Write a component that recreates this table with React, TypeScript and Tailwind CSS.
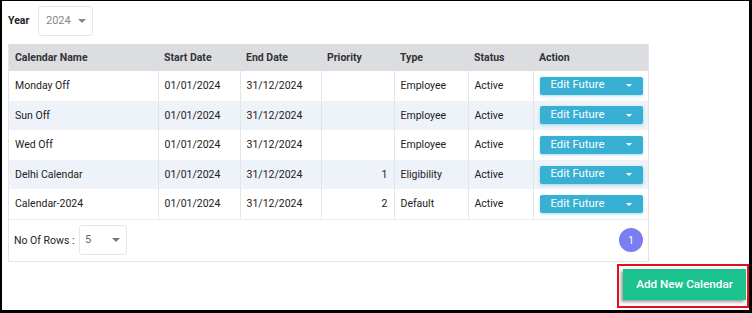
import { useState } from "react";

type CalendarRow = {
  name: string;
  start: string;
  end: string;
  priority?: number;
  type: string;
  status: string;
};

const rows: CalendarRow[] = [
  { name: "Monday Off", start: "01/01/2024", end: "31/12/2024", type: "Employee", status: "Active" },
  { name: "Sun Off", start: "01/01/2024", end: "31/12/2024", type: "Employee", status: "Active" },
  { name: "Wed Off", start: "01/01/2024", end: "31/12/2024", type: "Employee", status: "Active" },
  { name: "Delhi Calendar", start: "01/01/2024", end: "31/12/2024", priority: 1, type: "Eligibility", status: "Active" },
  { name: "Calendar-2024", start: "01/01/2024", end: "31/12/2024", priority: 2, type: "Default", status: "Active" },
];

function Caret({ className = "" }: { className?: string }) {
  return (
    <svg width="8" height="4" viewBox="0 0 8 4" className={className}>
      <path d="M0 0h8L4 4z" fill="currentColor" />
    </svg>
  );
}

export default function App() {
  const [year] = useState("2024");
  const [pageSize] = useState("5");

  return (
    <div className="h-[313px] w-[752px] overflow-hidden border-b-[3px] border-l-2 border-r-[3px] border-t border-black bg-white font-['Roboto',sans-serif] text-[10.5px] text-[#222]">
      <div className="pl-[6px] pr-[98px]">
        <div className="mt-[5px] flex h-[30px] items-center">
          <span className="w-[30px] text-[10.5px] font-bold text-[#222]">Year</span>
          <div className="flex h-[30px] w-[55px] items-center justify-between rounded-[3px] border border-[#e6e6e6] pl-[7px] pr-[6px] text-[11px] text-[#888]">
            <span>{year}</span>
            <Caret className="text-[#888]" />
          </div>
        </div>

        <div className="mt-[8px] w-[641px] border-b border-l border-r border-[#e4e5e8]">
          <table className="w-full table-fixed border-collapse">
            <colgroup>
              <col className="w-[149px]" />
              <col className="w-[82px]" />
              <col className="w-[81px]" />
              <col className="w-[73px]" />
              <col className="w-[74px]" />
              <col className="w-[65px]" />
              <col />
            </colgroup>
            <thead>
              <tr className="h-[27px] bg-[#dcdde1] text-left text-[10.5px] font-bold text-[#333]">
                <th className="px-[6px]">Calendar Name</th>
                <th className="px-[6px]">Start Date</th>
                <th className="px-[6px]">End Date</th>
                <th className="px-[6px]">Priority</th>
                <th className="px-[6px]">Type</th>
                <th className="px-[6px]">Status</th>
                <th className="px-[6px]">Action</th>
              </tr>
            </thead>
            <tbody>
              {rows.map((r, i) => (
                <tr key={r.name} className={i % 2 === 1 ? "h-[29.6px] bg-[#eef2f9]" : "h-[29.6px] bg-white"}>
                  <td className="border-r border-[#e4e5e8] px-[6px]">{r.name}</td>
                  <td className="border-r border-[#e4e5e8] px-[6px]">{r.start}</td>
                  <td className="border-r border-[#e4e5e8] px-[6px]">{r.end}</td>
                  <td className="border-r border-[#e4e5e8] px-[6px] text-right">{r.priority ?? ""}</td>
                  <td className="border-r border-[#e4e5e8] px-[6px]">{r.type}</td>
                  <td className="border-r border-[#e4e5e8] px-[6px]">{r.status}</td>
                  <td className="px-[6px]">
                    <button className="flex h-[18px] w-[103px] items-center justify-between rounded-[2px] bg-[#38b0d3] pl-[11px] pr-[11px] text-[11.3px] text-white shadow-[0_1px_3px_rgba(56,176,211,0.45)]">
                      <span>Edit Future</span>
                      <Caret className="h-[3px] w-[6px] text-white" />
                    </button>
                  </td>
                </tr>
              ))}
            </tbody>
          </table>

          <div className="flex h-[42px] items-center justify-between border-t border-[#eceef0] pl-[5px] pr-[5px]">
            <div className="flex items-center">
              <span className="w-[65px] text-[10.5px] text-[#222]">No Of Rows :</span>
              <div className="flex h-[30px] w-[48px] items-center justify-between rounded-[3px] border border-[#e6e6e6] pl-[5px] pr-[6px] text-[11px] text-[#666]">
                <span>{pageSize}</span>
                <Caret className="text-[#777]" />
              </div>
            </div>
            <span className="flex h-[24px] w-[24px] items-center justify-center rounded-full bg-[#7a7ef0] text-[10px] text-white">
              1
            </span>
          </div>
        </div>
      </div>

      <div className="mt-[2px] flex justify-end">
        <div className="h-[44px] w-[132px] border-2 border-[#e3101a] pb-[6px] pl-[4px] pr-[1px] pt-[3px]">
          <button className="h-full w-full bg-[#1cc38f] text-[11.7px] font-medium text-white shadow-[-2px_2px_3px_rgba(90,90,90,0.6)]">
            Add New Calendar
          </button>
        </div>
      </div>
    </div>
  );
}
